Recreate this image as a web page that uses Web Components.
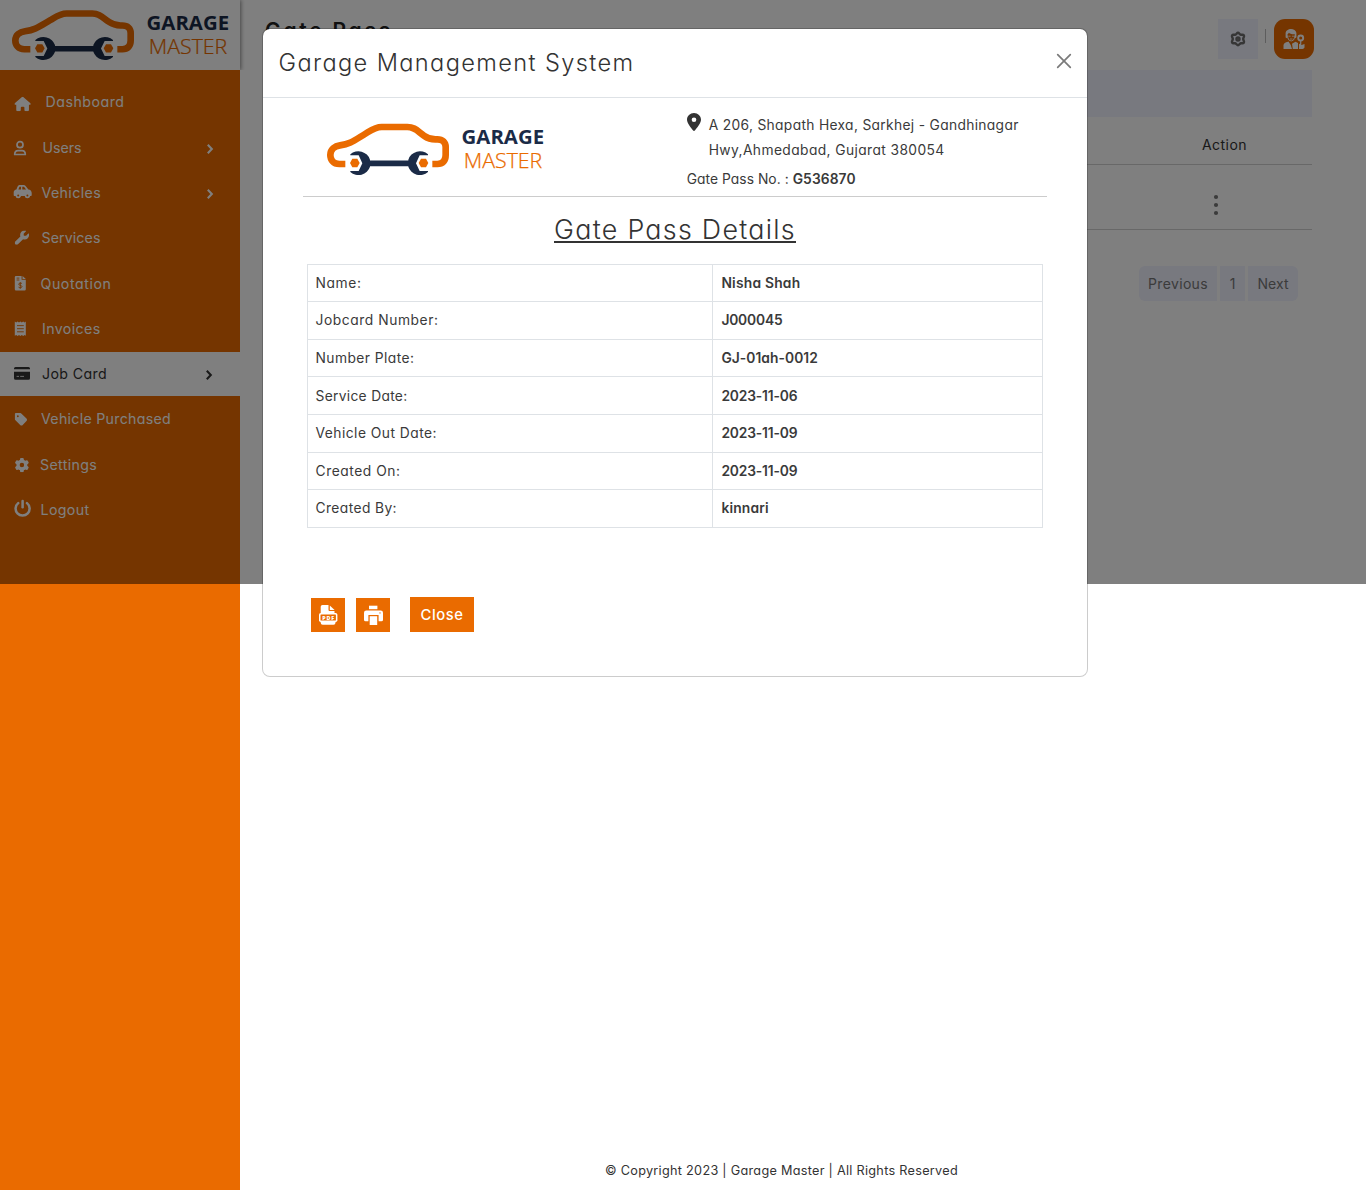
<!DOCTYPE html>
<html lang="en">
<head>
<meta charset="utf-8">
<title>Garage Management System</title>
<style>
  html, body { margin: 0; padding: 0; }
  body {
    font-family: Inter, "Open Sans", sans-serif;
    font-feature-settings: "cv11";
    font-optical-sizing: none;
    font-size: 13.8px; color: #3a3a3a; background: #fff;
  }
</style>
</head>
<body>
<gm-app></gm-app>
<script>
const root = (el, css, html) => {
  el.attachShadow({ mode: "open" }).innerHTML = `<style>${css}</style>${html}`;
};

const ICONS = {
  home: `<svg x="1.4" y="3.7" width="16.4" height="14.5" viewBox="0 0 576 512"><path d="M575.8 255.5c0 18-15 32.1-32 32.1h-32l.7 160.2c0 2.7-.2 5.4-.5 8.1V472c0 22.1-17.9 40-40 40H456c-1.1 0-2.2 0-3.3-.1c-1.4 .1-2.8 .1-4.2 .1H416 392c-22.1 0-40-17.9-40-40V448 384c0-17.7-14.3-32-32-32H256c-17.7 0-32 14.3-32 32v64 24c0 22.1-17.9 40-40 40H160 128.1c-1.5 0-3-.1-4.5-.2c-1.2 .1-2.4 .2-3.6 .2H104c-22.1 0-40-17.9-40-40V360c0-.9 0-1.9 .1-2.8V287.6H32c-18 0-32-14-32-32.1c0-9 3-17 10-24L266.4 8c7-7 15-8 22-8s15 2 21 7L564.8 231.5c8 7 12 15 11 24z"/></svg>`,
  user: `<g fill="none" stroke="currentColor" stroke-width="1.7"><circle cx="7" cy="6.7" r="3"/><path d="M1.7 16.5C1.7 13.6 3.2 12.6 5 12.6H9C10.8 12.6 12.3 13.6 12.3 16.5Z" stroke-linejoin="round"/></g>`,
  car: `<path fill-rule="evenodd" d="M3.4 6.6 4.6 3.6C5 2.6 5.8 2 6.8 2H10.6C11.4 2 12.1 2.3 12.6 3L15.4 6.6C17.3 6.8 18.7 8.2 18.7 10V12C18.7 12.6 18.3 13 17.7 13H16.9A2.5 2.5 0 0 1 12 13H7.7A2.5 2.5 0 0 1 2.8 13H1.7C1.1 13 .7 12.6 .7 12V9.4C.7 8 1.8 6.7 3.4 6.6ZM5.4 6.6H8V3.8H6.5ZM9.3 3.8V6.6H13.1L11.2 4.1C11 3.9 10.8 3.8 10.6 3.8Z"/><circle cx="5.2" cy="12.6" r="2.6"/><circle cx="14.4" cy="12.6" r="2.6"/><g fill="#ea6b00"><circle cx="5.2" cy="12.5" r="1"/><circle cx="14.4" cy="12.5" r="1"/></g>`,
  wrench: `<svg x="1.7" y="2.4" width="14.4" height="14.4" viewBox="0 0 512 512"><path d="M352 320c88.4 0 160-71.6 160-160c0-15.3-2.2-30.1-6.2-44.2c-3.1-10.8-16.4-13.2-24.3-5.3l-76.8 76.8c-3 3-7.1 4.7-11.3 4.7H336c-8.8 0-16-7.2-16-16V118.6c0-4.2 1.7-8.3 4.7-11.3l76.8-76.8c7.9-7.9 5.4-21.2-5.3-24.3C382.1 2.2 367.3 0 352 0C263.6 0 192 71.6 192 160c0 19.1 3.4 37.5 9.5 54.5L19.9 396.1C7.2 408.8 0 426.1 0 444.1C0 481.6 30.4 512 67.9 512c18 0 35.3-7.2 48-19.9L297.5 310.5c17 6.2 35.4 9.5 54.5 9.5z"/></svg>`,
  quote: `<path d="M3 2H8.6V5.7H12.8V15.2Q12.8 16.4 11.6 16.4H3Q1.8 16.4 1.8 15.2V3.2Q1.8 2 3 2Z"/><path d="M9.5 2 12.8 4.9H9.5Z"/><g fill="none" stroke="#ea6b00" stroke-width=".9"><path d="M3.6 4.1H6.4M3.6 6H6.4"/><path d="M9 9.6C8.5 8.9 5.7 8.7 5.7 10.2S9 11.1 9 12.6 5.9 13.9 5.5 13.1M7.3 8.2V14.8"/></g>`,
  receipt: `<path d="M1.8 2.6 3.2 3.5 4.6 2.4 6 3.5 7.4 2.4 8.8 3.5 10.2 2.4 11.6 3.5 12.8 2.6V16.8L11.6 15.9 10.2 17 8.8 15.9 7.4 17 6 15.9 4.6 17 3.2 15.9 1.8 16.8Z"/><path d="M4 6.6H10.8M4 9.7H10.8M4 12.8H10.8" stroke="#ea6b00" stroke-width=".9"/>`,
  card: `<path d="M2.5 3.1H15.5Q17 3.1 17 4.6V5.2H1V4.6Q1 3.1 2.5 3.1ZM1 7.7H17V14.3Q17 15.8 15.5 15.8H2.5Q1 15.8 1 14.3Z"/><path d="M3.6 12.4H6M7.2 12.4H11" stroke="#fff" stroke-width=".8"/>`,
  tag: `<svg x="1.7" y="2.2" width="12.6" height="14.4" viewBox="0 0 448 512"><path d="M0 80V229.5c0 17 6.7 33.3 18.7 45.3l176 176c25 25 65.5 25 90.5 0L418.7 317.3c25-25 25-65.5 0-90.5l-176-176c-12-12-28.3-18.7-45.3-18.7H48C21.5 32 0 53.5 0 80zm112 32a32 32 0 1 1 0 64 32 32 0 1 1 0-64z"/></svg>`,
  gear: `<svg x="1.7" y="2.9" width="14.4" height="14.4" viewBox="0 0 512 512"><path d="M495.9 166.6c3.2 8.7 .5 18.4-6.4 24.6l-43.3 39.4c1.1 8.3 1.7 16.8 1.7 25.4s-.6 17.1-1.7 25.4l43.3 39.4c6.9 6.2 9.6 15.9 6.4 24.6c-4.4 11.9-9.7 23.3-15.8 34.3l-4.7 8.1c-6.6 11-14 21.4-22.1 31.2c-5.9 7.2-15.7 9.6-24.5 6.8l-55.7-17.7c-13.4 10.3-28.2 18.9-44 25.4l-12.5 57.1c-2 9.1-9 16.3-18.2 17.8c-13.8 2.3-28 3.5-42.5 3.5s-28.7-1.2-42.5-3.5c-9.2-1.5-16.2-8.7-18.2-17.8l-12.5-57.1c-15.8-6.5-30.6-15.1-44-25.4L83.1 425.9c-8.8 2.8-18.6 .3-24.5-6.8c-8.1-9.8-15.5-20.2-22.1-31.2l-4.7-8.1c-6.1-11-11.4-22.4-15.8-34.3c-3.2-8.7-.5-18.4 6.4-24.6l43.3-39.4C64.6 273.1 64 264.6 64 256s.6-17.1 1.7-25.4L22.4 191.2c-6.9-6.2-9.6-15.9-6.4-24.6c4.4-11.9 9.7-23.3 15.8-34.3l4.7-8.1c6.6-11 14-21.4 22.1-31.2c5.9-7.2 15.7-9.6 24.5-6.8l55.7 17.7c13.4-10.3 28.2-18.9 44-25.4l12.5-57.1c2-9.1 9-16.3 18.2-17.8C227.3 1.2 241.5 0 256 0s28.7 1.2 42.5 3.5c9.2 1.5 16.2 8.7 18.2 17.8l12.5 57.1c15.8 6.5 30.6 15.1 44 25.4l55.7-17.7c8.8-2.8 18.6-.3 24.5 6.8c8.1 9.8 15.5 20.2 22.1 31.2l4.7 8.1c6.1 11 11.4 22.4 15.8 34.3zM256 336a80 80 0 1 0 0-160 80 80 0 1 0 0 160z"/></svg>`,
  power: `<g fill="none" stroke="currentColor" stroke-width="2.5" stroke-linecap="round"><path d="M5.2 3.1A7 7 0 1 0 14 3.1"/><path d="M9.6 .9V7.3"/></g>`
};

class GmLogo extends HTMLElement {
  constructor() {
    super();
    root(this, `:host{display:block;width:230px;height:66px} svg{display:block;width:100%;height:100%}
      text{font-family:"Open Sans",sans-serif;font-size:20px}`,
    `<svg viewBox="0 0 230 66" preserveAspectRatio="none">
      <g transform="scale(.33333)">
        <path d="M76 147H58C40 147 31 134 31 120C31 102 45 93 60 91C90 87 102 77 135 57C153 46 165 36 185 36H262C285 36 292 48 312 62C330 75 340 73 352 73C368 73 377 82 377 96V120C377 138 368 147 352 147H337" fill="none" stroke="#ea6b00" stroke-width="20"/>
        <g fill="#1b2b47">
          <path d="M91 118A36.5 36.5 0 0 1 150 134V155A36.5 36.5 0 0 1 91 171L91 168H116L127 144.500 116 121H91Z"/>
          <path d="M324 118A36.5 36.5 0 0 0 265 134V155A36.5 36.5 0 0 0 324 171L324 168H299L288 144.500 299 121H324Z"/>
          <path d="M146 136.500H269V154H146Z"/>
        </g>
        <g fill="#ea6b00"><path d="M90 144 97 131H112L119 144 112 157H97Z"/><path d="M296 144 303 131H318L325 144 318 157H303Z"/></g>
      </g>
      <text x="141.600" y="29.300" font-weight="700" fill="#1b2b47" textLength="82.500" lengthAdjust="spacingAndGlyphs">GARAGE</text>
      <text x="143.800" y="53.400" font-weight="300" fill="#ea6b00" stroke="#ea6b00" stroke-width=".25" textLength="78.500" lengthAdjust="spacingAndGlyphs">MASTER</text>
    </svg>`);
  }
}

class GmNavItem extends HTMLElement {
  connectedCallback() {
    if (this.shadowRoot) return;
    const arrow = this.hasAttribute("arrow")
      ? `<svg class="arrow" style="margin-right:${this.getAttribute("arrow")}px" viewBox="0 0 8 12"><path d="M1.800 1.800 5.800 6 1.800 10.200" fill="none" stroke="currentColor" stroke-width="2.100"/></svg>` : "";
    root(this, `:host{display:flex;align-items:center;height:44px;box-sizing:border-box;color:#fff;font-size:14.2px;padding:0 0 1px 13px}
      :host([active]){background:#fff;color:#333}
      .icon{width:20px;height:20px;overflow:visible;flex:none;fill:currentColor;margin-top:1.4px;margin-right:${this.getAttribute("x") - 32.5}px}
      .arrow{width:8px;height:12px;margin-left:auto;margin-top:3px}`,
    `<svg class="icon" viewBox="0 0 20 20">${ICONS[this.getAttribute("icon")]}</svg><slot></slot>${arrow}`);
  }
}

class GmSidebar extends HTMLElement {
  constructor() {
    super();
    root(this, `:host{display:flex;flex-direction:column;background:#ea6b00;width:240px;height:1190px}
      header{background:#fff;height:70px;box-sizing:border-box;padding:1.6px 0 0 5px;box-shadow:1px 0 4px rgba(0,0,0,.45);clip-path:inset(0 -6px 0 0)}
      gm-logo{height:63.7px}
      nav{display:flex;flex-direction:column;gap:1.3px;padding-top:10.4px}`,
    `<header><gm-logo></gm-logo></header>
     <nav>
      <gm-nav-item icon="home" x="45"><gm-text w="79">Dashboard</gm-text></gm-nav-item>
      <gm-nav-item icon="user" x="42" arrow="26.5"><gm-text w="39">Users</gm-text></gm-nav-item>
      <gm-nav-item icon="car" x="41" arrow="26"><gm-text w="59.5">Vehicles</gm-text></gm-nav-item>
      <gm-nav-item icon="wrench" x="41"><gm-text w="59">Services</gm-text></gm-nav-item>
      <gm-nav-item icon="quote" x="40"><gm-text w="71">Quotation</gm-text></gm-nav-item>
      <gm-nav-item icon="receipt" x="41.5"><gm-text w="58.5">Invoices</gm-text></gm-nav-item>
      <gm-nav-item icon="card" x="41.5" arrow="27" active><gm-text w="65">Job Card</gm-text></gm-nav-item>
      <gm-nav-item icon="tag" x="40.5"><gm-text w="130">Vehicle Purchased</gm-text></gm-nav-item>
      <gm-nav-item icon="gear" x="39.5"><gm-text w="57">Settings</gm-text></gm-nav-item>
      <gm-nav-item icon="power" x="40"><gm-text w="49">Logout</gm-text></gm-nav-item>
     </nav>`);
  }
}

class GmMain extends HTMLElement {
  constructor() {
    super();
    root(this, `:host{display:flex;flex-direction:column;height:1190px;box-sizing:border-box;padding:0 54px 0 24px}
      header{display:flex;height:70px;box-sizing:border-box;padding-top:19px;margin-right:-2px}
      h1{margin:-2px 0 0 1px;font-size:21px;font-weight:600;line-height:28px;color:#222}
      .gear{margin-left:auto;width:40px;height:40px;background:#f0f2ff}
      .sep{width:1px;height:14px;background:#bbb;margin:10px 8px 0 7px}
      .user{width:40px;height:40px;border-radius:11px;background:#ea6b00}
      .bar{height:47px;background:#f0f2ff}
      .row{display:flex;justify-content:flex-end;align-items:center;box-sizing:border-box;border-bottom:1px solid #d0d0d0}
      .head{height:48px;padding:8px 65px 0 0;font-size:14px;color:#333}
      .item{height:65px;padding-right:92px}
      .pages{display:flex;gap:3px;justify-content:flex-end;padding:36px 14px 0 0;color:#777;font-size:14px}
      .pages span{height:35px;background:#f0f2ff;display:flex;align-items:center;justify-content:center;box-sizing:border-box;padding-bottom:1px}
      .pages span:first-child{width:78px;border-radius:6px 0 0 6px}
      .pages span:nth-child(2){width:25px}
      .pages span:last-child{width:50px;border-radius:0 6px 6px 0}
      footer{margin-top:auto;height:40px;display:flex;align-items:center;padding-left:341px;color:#333;font-size:12.7px}
      svg{display:block}`,
    `<header><h1><gm-text w="128">Gate Pass</gm-text></h1>
      <div class="gear"><svg width="40" height="40" viewBox="0 0 40 40" fill="none" stroke="#6c6c6c"><path d="M20 13.800C21.200 13.800 21.600 15.500 22.800 15.700 24.200 15.900 25.100 15.200 25.900 16.400 26.600 17.700 25.200 18.700 25.200 20S26.600 22.300 25.900 23.600C25.100 24.800 24.200 24.100 22.800 24.300 21.600 24.500 21.200 26.200 20 26.200S18.400 24.500 17.200 24.300C15.800 24.100 14.900 24.800 14.100 23.600 13.400 22.300 14.800 21.300 14.800 20S13.400 17.700 14.100 16.400C14.900 15.200 15.800 15.900 17.200 15.700 18.400 15.500 18.800 13.800 20 13.800Z" stroke-width="2.400"/><circle cx="20" cy="20" r="1.500" stroke-width="2.400"/></svg></div>
      <div class="sep"></div>
      <div class="user"><svg width="40" height="40" viewBox="0 0 40 40"><g fill="#fff"><path d="M11.600 18.500V14.500C11.600 8.800 21.600 8.300 22.400 14V18.300L20.800 19.500V15.200C18.500 15.500 16 15 15 13.800L13.500 15.500V19.500Z"/><path d="M9.500 30V27C9.500 24.500 10.700 23.600 14.500 22.500L16.700 26 18 30ZM18.800 30 18 24.700 21.500 22.800 24 24V30Z"/><path d="M25 30V25.200L26.500 24.300 27.600 26 30.500 25V28.600Q30 30 28.500 30Z"/></g><g fill="none" stroke="#fff"><path d="M13.700 16.500V18.200Q14.300 22 17.200 22T20.700 18.200V16.500" stroke-width=".9"/><path d="M14.500 17.200H16.600M17.900 17.200H20M16 20H18.500" stroke-width=".8"/><circle cx="26.700" cy="19" r="2.500" stroke-width="1.900"/><path d="M26.700 21.500V25" stroke-width="1.200"/></g></svg></div>
     </header>
     <div class="bar"></div>
     <div class="row head"><gm-text w="45">Action</gm-text></div>
     <div class="row item"><svg width="8" height="24" viewBox="0 0 8 24" fill="#777" style="margin-top:16px"><circle cx="4" cy="4" r="2.100"/><circle cx="4" cy="12" r="2.100"/><circle cx="4" cy="20" r="2.100"/></svg></div>
     <div class="pages"><span><gm-text w="60">Previous</gm-text></span><span>1</span><span><gm-text w="31">Next</gm-text></span></div>
     <footer><gm-text w="353">© Copyright 2023 | Garage Master | All Rights Reserved</gm-text></footer>`);
  }
}

class GmDetail extends HTMLElement {
  connectedCallback() {
    if (this.shadowRoot) return;
    root(this, `:host{display:grid;grid-template-columns:404px 1fr;height:37.6px;box-sizing:border-box;border-bottom:1px solid #dee2e6}
      div{display:flex;align-items:center;padding-left:7.5px}
      div+div{border-left:1px solid #dee2e6;font-weight:600;padding-left:8.4px}`,
    `<div><slot name="label"></slot></div><div><slot></slot></div>`);
  }
}

class GmModal extends HTMLElement {
  constructor() {
    super();
    const rows = [["Name:", 46, "Nisha Shah", 79], ["Jobcard Number:", 123, "J000045", 61],
      ["Number Plate:", 99, "GJ-01ah-0012", 96.5], ["Service Date:", 92, "2023-11-06", 76],
      ["Vehicle Out Date:", 121.5, "2023-11-09", 76], ["Created On:", 85, "2023-11-09", 76],
      ["Created By:", 81.5, "kinnari", 47.5]];
    root(this, `:host{display:block;box-sizing:border-box;width:826px;height:649px;background:#fff;border:1px solid rgba(0,0,0,.2);background-clip:padding-box;border-radius:8px}
      .top{display:flex;justify-content:space-between;height:69px;box-sizing:border-box;border-bottom:1px solid #dee2e6;padding:0 15px}
      h2{margin:0 0 0 .5px;font-weight:300;font-size:23.6px;line-height:68px;color:#333}
      .x{margin-top:24px}
      .body{padding:0 40px}
      .info{display:flex;height:99px;box-sizing:border-box;border-bottom:1px solid #ccc}
      gm-logo{margin:17px 0 0 17px}
      .addr{margin:15px 0 0 136.7px;display:grid;grid-template-columns:22px 1fr;line-height:25px;align-content:start}
      .no{grid-column:1/3;margin-top:4px;display:flex;gap:4px}
      .no b{font-weight:600}
      h3{margin:17px 0 0;text-align:center;font-weight:300;font-size:26.8px;line-height:30px;color:#333}
      h3 gm-text{text-decoration:underline;text-decoration-thickness:2px;text-underline-offset:2px}
      .table{margin:19.600px 4px 0;border:1px solid #dee2e6;border-bottom:0}
      .actions{display:flex;align-items:flex-end;margin:69.600px 0 0 8px}
      .sq{width:34px;height:34px;background:#ea6b00;margin-right:11px}
      button{margin:0 0 0 9px;border:0;padding:0;width:64px;height:35px;background:#ea6b00;color:#fff;font:500 14.8px Inter,sans-serif;font-feature-settings:"cv11"}
      svg{display:block}`,
    `<div class="top"><h2><gm-text w="356">Garage Management System</gm-text></h2>
      <svg class="x" width="16" height="16" viewBox="0 0 16 16" stroke="#7a7a7a" stroke-width="1.700" stroke-linecap="round"><path d="M1.700 1.700 14.300 14.300M14.300 1.700 1.700 14.300"/></svg></div>
     <div class="body">
      <div class="info"><gm-logo></gm-logo>
       <div class="addr">
        <svg width="14" height="18" viewBox="0 0 384 512" preserveAspectRatio="none" fill="#333"><path d="M215.700 499.200C267 435 384 279.400 384 192C384 86 298 0 192 0S0 86 0 192c0 87.400 117 243 168.300 307.200c12.300 15.300 35.100 15.300 47.400 0zM192 128a64 64 0 1 1 0 128 64 64 0 1 1 0-128z"/></svg>
        <div><gm-text w="310">A 206, Shapath Hexa, Sarkhej - Gandhinagar</gm-text><br><gm-text w="236">Hwy,Ahmedabad, Gujarat 380054</gm-text></div>
        <div class="no"><gm-text w="102">Gate Pass No. :</gm-text><b><gm-text w="63">G536870</gm-text></b></div>
       </div></div>
      <h3><gm-text w="242">Gate Pass Details</gm-text></h3>
      <div class="table">${rows.map(r => `<gm-detail><gm-text slot="label" w="${r[1]}">${r[0]}</gm-text><gm-text w="${r[3]}">${r[2]}</gm-text></gm-detail>`).join("")}</div>
      <div class="actions">
       <div class="sq"><svg width="34" height="34" viewBox="0 0 34 34"><g fill="#fff"><path d="M11.500 7H17.500V12Q17.500 13 18.500 13H23.500V15H9.700V8.800Q9.700 7 11.500 7Z"/><path d="M18.800 7.600 23.600 12H18.800Z"/><rect x="8" y="15" width="18.400" height="9" rx="1.800"/><path d="M9.700 23H24.500V24.600Q24.500 26.800 22.500 26.800H11.700Q9.700 26.800 9.700 24.600Z"/></g><rect x="9.500" y="16.400" width="15.400" height="6.200" rx=".6" fill="#ea6b00"/><text x="11.300" y="21.500" font-family="Open Sans" font-weight="800" font-size="5.400" textLength="11.800" fill="#fff">PDF</text></svg></div>
       <div class="sq"><svg width="34" height="34" viewBox="0 0 34 34"><g fill="#fff"><rect x="13" y="7.700" width="8.400" height="3.500"/><path d="M10.300 12.500H24.700Q27 12.500 27 14.800V21.700Q27 23.200 25.500 23.200H22.600V17H12.400V23.200H9.500Q8 23.200 8 21.700V14.800Q8 12.500 10.300 12.500Z"/><rect x="13.700" y="18.200" width="7.500" height="8.800"/></g><circle cx="24" cy="14.900" r=".7" fill="#ea6b00"/></svg></div>
       <button><gm-text w="43">Close</gm-text></button>
      </div>
     </div>`);
  }
}

class GmApp extends HTMLElement {
  constructor() {
    super();
    root(this, `:host{display:grid;grid-template-columns:240px 1fr;position:relative;width:1366px;height:1190px;overflow:hidden}
      .backdrop{position:absolute;inset:0 0 auto 0;height:584px;background:rgba(0,0,0,.5)}
      gm-modal{position:absolute;left:262px;top:28px}
      gm-sidebar{position:relative}`,
    `<gm-sidebar></gm-sidebar><gm-main></gm-main><div class="backdrop"></div><gm-modal></gm-modal>`);
  }
}

/* A single line of text tracked out (or in) to a given width. */
class GmText extends HTMLElement {
  connectedCallback() {
    if (this.shadowRoot) return;
    root(this, `:host{display:inline-block;white-space:nowrap}`, `<slot></slot>`);
    const w = +this.getAttribute("w");
    const n = this.textContent.length;
    const natural = this.getBoundingClientRect().width;
    this.style.letterSpacing = ((w - natural) / n).toFixed(3) + "px";
  }
}

customElements.define("gm-app", GmApp);
customElements.define("gm-sidebar", GmSidebar);
customElements.define("gm-main", GmMain);
customElements.define("gm-modal", GmModal);
customElements.define("gm-logo", GmLogo);
customElements.define("gm-nav-item", GmNavItem);
customElements.define("gm-detail", GmDetail);
customElements.define("gm-text", GmText);
</script>
</body>
</html>
